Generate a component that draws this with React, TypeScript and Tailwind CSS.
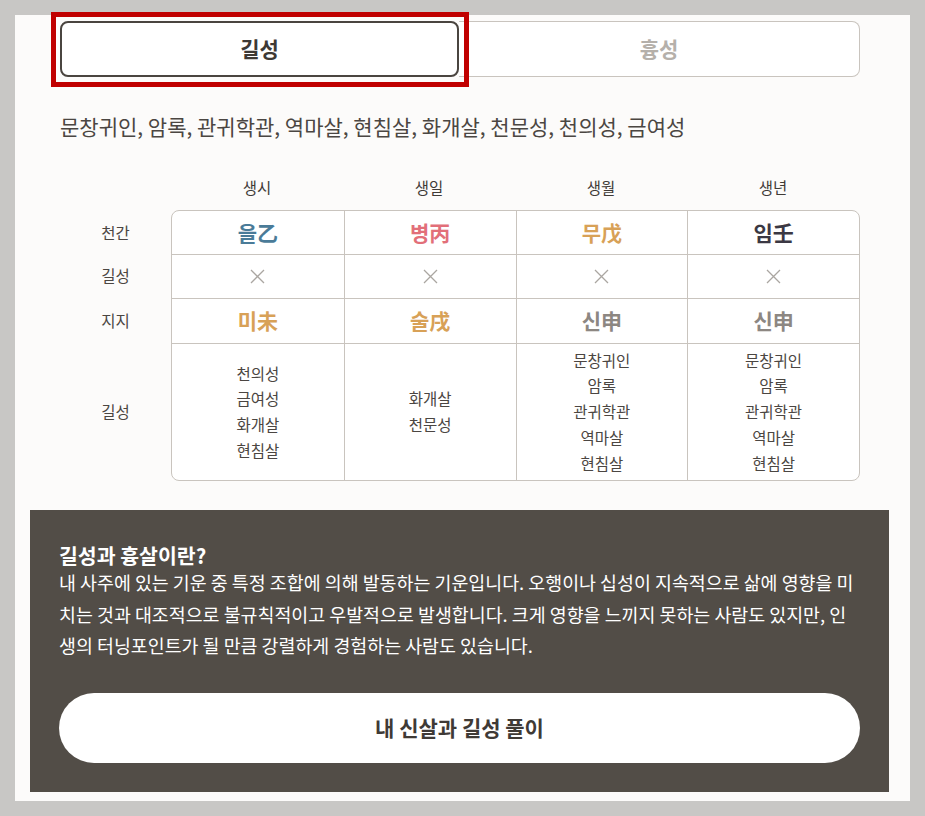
import React from "react";

const FONT = { fontFamily: '"Noto Sans CJK KR", "Noto Sans", sans-serif' };

function Cross() {
  return (
    <svg width="15" height="15" viewBox="0 0 15 15" aria-hidden="true">
      <path d="M1 1 L14 14 M14 1 L1 14" stroke="#aaa6a1" strokeWidth="1.3" fill="none" />
    </svg>
  );
}

const heaven = [
  { t: "을乙", c: "text-[#4a7b98]" },
  { t: "병丙", c: "text-[#e26f79]" },
  { t: "무戊", c: "text-[#d8a157]" },
  { t: "임壬", c: "text-[#3b3843]" },
];
const earth = [
  { t: "미未", c: "text-[#d8a157]" },
  { t: "술戌", c: "text-[#d8a157]" },
  { t: "신申", c: "text-[#8d8782]" },
  { t: "신申", c: "text-[#8d8782]" },
];
const stars = [
  ["천의성", "금여성", "화개살", "현침살"],
  ["화개살", "천문성"],
  ["문창귀인", "암록", "관귀학관", "역마살", "현침살"],
  ["문창귀인", "암록", "관귀학관", "역마살", "현침살"],
];

export default function App() {
  return (
    <div className="relative w-[925px] h-[816px] bg-[#c8c7c5] overflow-hidden pt-[15px] pl-[15px]" style={FONT}>
      <div className="w-[895px] h-[786px] bg-[#fcfbfa] pt-[6px]">
        {/* Tabs */}
        <div className="ml-[45px] w-[800px] h-[56px] flex">
          <div className="w-[399px] h-[56px] bg-white border-2 border-[#4a4540] rounded-[8px] flex items-center justify-center text-[21px] font-bold text-[#3d3935]">
            길성
          </div>
          <div className="w-[401px] h-[56px] bg-white border-y border-r border-[#c9c4be] rounded-r-[8px] flex items-center justify-center text-[21px] font-bold text-[#b5b0aa]">
            흉성
          </div>
        </div>

        {/* Keywords */}
        <div className="ml-[45px] mt-[35px] text-[21px] leading-[28px] text-[#4b4642]">
          문창귀인, 암록, 관귀학관, 역마살, 현침살, 화개살, 천문성, 천의성, 금여성
        </div>

        {/* Table */}
        <div className="ml-[45px] mt-[37px] w-[800px]">
          <div className="flex h-[20px] text-[15.5px] leading-[20px] text-[#3f3a36]">
            <div className="w-[111px]" />
            {["생시", "생일", "생월", "생년"].map((h) => (
              <div key={h} className="w-[172px] text-center">
                {h}
              </div>
            ))}
          </div>
          <div className="flex mt-[13px]">
            <div className="w-[111px] flex flex-col pt-px text-[15.5px] text-[#4b4642]">
              <div className="h-[43px] flex items-center justify-center">천간</div>
              <div className="h-[44px] flex items-center justify-center">길성</div>
              <div className="h-[45px] flex items-center justify-center">지지</div>
              <div className="h-[137px] flex items-center justify-center">길성</div>
            </div>
            <div className="w-[689px] border border-[#c9c4be] rounded-[8px] overflow-hidden bg-white">
              <div className="grid grid-cols-4 h-[43px]">
                {heaven.map((h, i) => (
                  <div
                    key={i}
                    className={`flex items-center justify-center text-[21px] font-bold ${h.c} ${i > 0 ? "border-l border-[#c9c4be]" : ""}`}
                  >
                    {h.t}
                  </div>
                ))}
              </div>
              <div className="grid grid-cols-4 h-[44px] border-t border-[#c9c4be]">
                {[0, 1, 2, 3].map((i) => (
                  <div
                    key={i}
                    className={`flex items-center justify-center ${i > 0 ? "border-l border-[#c9c4be]" : ""}`}
                  >
                    <Cross />
                  </div>
                ))}
              </div>
              <div className="grid grid-cols-4 h-[45px] border-t border-[#c9c4be]">
                {earth.map((h, i) => (
                  <div
                    key={i}
                    className={`flex items-center justify-center text-[21px] font-bold ${h.c} ${i > 0 ? "border-l border-[#c9c4be]" : ""}`}
                  >
                    {h.t}
                  </div>
                ))}
              </div>
              <div className="grid grid-cols-4 h-[137px] border-t border-[#c9c4be]">
                {stars.map((col, i) => (
                  <div
                    key={i}
                    className={`flex flex-col items-center justify-center text-[15.5px] leading-[25.7px] text-[#4b4642] ${i > 0 ? "border-l border-[#c9c4be]" : ""}`}
                  >
                    {col.map((s, j) => (
                      <div key={j}>{s}</div>
                    ))}
                  </div>
                ))}
              </div>
            </div>
          </div>
        </div>

        {/* Dark panel */}
        <div className="ml-[15px] mt-[29px] w-[859px] h-[282px] bg-[#524d47] px-[29px] pt-[33px]">
          <div className="text-[20.5px] leading-[24px] font-bold text-white">길성과 흉살이란?</div>
          <p className="text-[18.4px] leading-[31.5px] text-white">
            내 사주에 있는 기운 중 특정 조합에 의해 발동하는 기운입니다. 오행이나 십성이 지속적으로 삶에 영향을 미치는 것과 대조적으로 불규칙적이고 우발적으로 발생합니다. 크게 영향을 느끼지 못하는 사람도 있지만, 인생의 터닝포인트가 될 만큼 강렬하게 경험하는 사람도 있습니다.
          </p>
          <button className="mt-[31px] w-full h-[70px] bg-white rounded-full text-[21px] font-bold text-[#3f3a36] flex items-center justify-center">
            내 신살과 길성 풀이
          </button>
        </div>
      </div>

      {/* Red highlight annotation */}
      <div className="absolute top-[12px] left-[51px] w-[418px] h-[75px] border-[5px] border-[#c00000] pointer-events-none" />
    </div>
  );
}
